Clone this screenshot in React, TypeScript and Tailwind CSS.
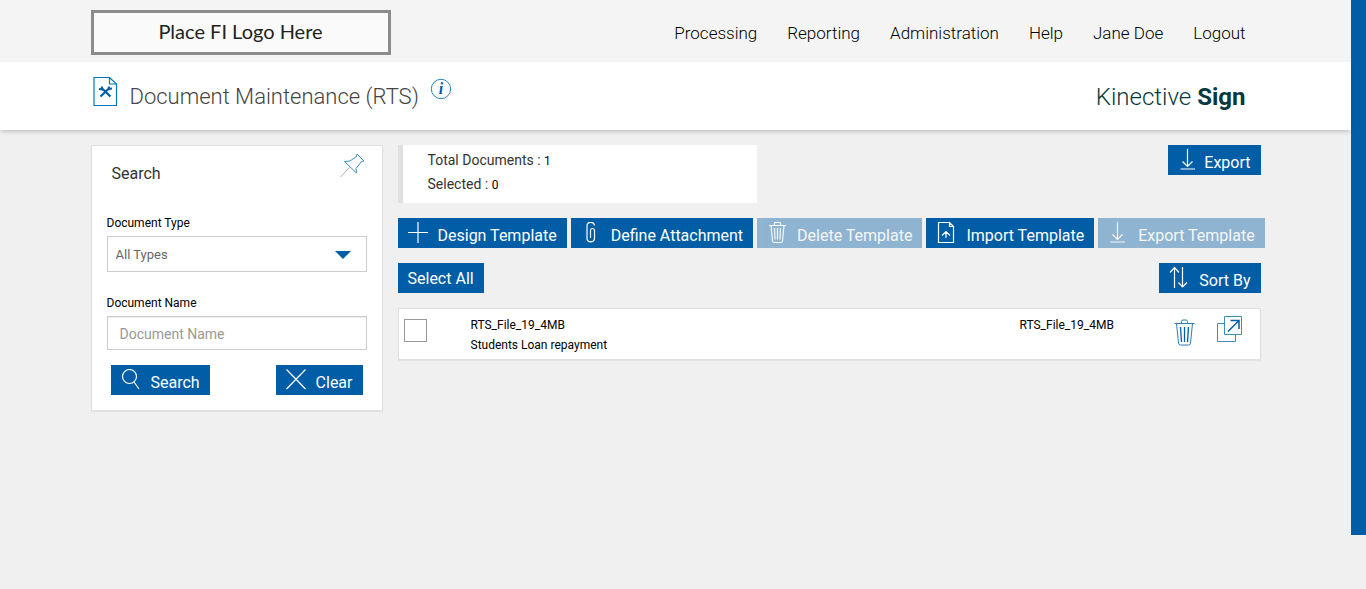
import type { ButtonHTMLAttributes, ReactNode } from "react";

const icons: Record<string, ReactNode> = {
  plus: <path d="M10 0v21M0 10.500h20" />,
  clip: <path d="M6 6.500V3.500a3.500 3 0 0 1 7.500 0M6 6.500v10.500a3.800 3.500 0 0 0 7.500 0V8.500a2 2 0 0 0-4 0V16" />,
  trash: (
    <path d="M2 3.500h17M7.500 3.500V1.500q0-1 1-1h4q1 0 1 1v2M4 3.500l1.500 15.500q.2 1.500 1.500 1.500h7q1.300 0 1.500-1.500L17 3.500M7.500 6l.5 11.500M10.500 6v11.500M13.500 6l-.5 11.500" />
  ),
  importFile: <path d="M2.500.5h11l4 4v16h-15zM13.500.5v4h4M10 16V9.500M6 13.500l4-4 4 4" />,
  download: <path d="M9.500 0v17M4.500 12.500l5 5 5-5M2.500 20h14.500" />,
  sort: <path d="M5.500 21V1M1 5.500l4.500-5 4.500 5M13.500 0v20M9.500 15.500l4 4.500 4.500-4.500" />,
  search: (
    <>
      <circle cx="8.500" cy="7.500" r="7" />
      <path d="M13 13l5 7" />
    </>
  ),
  close: <path d="M.5.5l19 19.500M19.500.5L.5 20" />,
};

function ActionButton({
  icon,
  tight = false,
  children,
  ...rest
}: { icon?: string; tight?: boolean; children: ReactNode } & ButtonHTMLAttributes<HTMLButtonElement>) {
  return (
    <button
      type="button"
      className={`flex h-[30px] shrink-0 items-start bg-[#005da6] px-2.5 text-base leading-8 whitespace-nowrap text-white hover:bg-[#004f8d] disabled:opacity-40 disabled:hover:bg-[#005da6] ${tight ? "gap-1.5" : "gap-2.5"}`}
      {...rest}
    >
      {icon && (
        <svg aria-hidden="true" viewBox="0 0 20 22" className="mt-1 h-[22px] w-5 shrink-0" fill="none" stroke="currentColor" strokeWidth="1.2">
          {icons[icon]}
        </svg>
      )}
      <span className={icon ? "pt-0.5" : ""}>{children}</span>
    </button>
  );
}

const navItems = ["Processing", "Reporting", "Administration", "Help", "Jane Doe", "Logout"];

function Header() {
  return (
    <header>
      <div className="bg-[#f4f4f4]">
        <div className="mx-auto flex h-[62px] max-w-[1170px] items-center justify-between pt-0.5 pr-[15px]">
          <div className="flex h-[45px] w-[300px] items-center justify-center border-3 border-[#8c8c8c] bg-[#fafafa] pb-0.5 font-['Lato',sans-serif] text-xl text-[#222]">
            Place FI Logo Here
          </div>
          <nav className="flex gap-[30px] pt-1 text-[17px] font-light text-black">
            {navItems.map((item) => (
              <a key={item} href="#">{item}</a>
            ))}
          </nav>
        </div>
      </div>
      <div className="relative bg-white shadow-[0_3px_4px_-1px_rgba(0,0,0,0.18)]">
        <div className="mx-auto flex h-[68px] max-w-[1170px] items-center justify-between pr-[15px]">
          <div className="flex items-start pb-0.5">
            <svg aria-hidden="true" viewBox="0 0 25 30" className="ml-0.5 h-[30px] w-[25px]" fill="none" stroke="#0079b8" strokeWidth="1.2">
              <path d="M1 .5h15.500l7 6.500v21.500H1zM16.500.5V7h7" />
              <path d="M8 10.500l9.500 9M17 10.500l-9.500 9" stroke="#005da6" strokeWidth="2.200" />
              <path d="M6 12l3 .5V9.500M19 11.500l-3 .5-.5-2.500" stroke="#005da6" strokeWidth="1.800" />
            </svg>
            <h1 className="ml-3 pt-1 text-[22px] leading-[32px] font-light text-[#444]">Document Maintenance (RTS)</h1>
            <button type="button" aria-label="Information" className="mt-px ml-[11px]">
              <svg viewBox="0 0 22 22" className="h-[22px] w-[22px]">
                <circle cx="11" cy="11" r="9.700" fill="none" stroke="#2c86bd" />
                <text x="11" y="16" textAnchor="middle" fill="#005da6" className="font-['Liberation_Serif',serif] text-[16px] font-bold italic">i</text>
              </svg>
            </button>
          </div>
          <div className="pt-0.5 text-[24px] leading-8 text-[#06383d]">
            <span className="font-light">Kinective</span> <span className="font-bold">Sign</span>
          </div>
        </div>
      </div>
    </header>
  );
}

function SearchPanel() {
  return (
    <aside className="w-[292px] shrink-0 self-start border border-[#dfdfdf] bg-white px-[15px] pb-[15px] text-black shadow-[0_1px_1px_rgba(0,0,0,0.05)]">
      <div className="flex items-start justify-between pr-0.5 pl-[5px]">
        <h2 className="pt-3.5 text-base leading-7 text-[#333]">Search</h2>
        <button type="button" aria-label="Pin panel" className="mt-[7px]">
          <svg viewBox="0 0 26 26" className="h-[26px] w-[26px]" fill="none" stroke="#3a8fc0">
            <path d="M18 1l7 7-2.500.5-5.500 7 .5 4.500-12-11.500 5.500-.5 6.500-4.500z" />
            <path d="M10.500 14.500L1.500 24" stroke="#a9b8b0" />
          </svg>
        </button>
      </div>
      <label htmlFor="document-type" className="mt-[25px] block text-xs leading-5">Document Type</label>
      <div className="relative mt-[3px]">
        <select id="document-type" className="block h-9 w-full appearance-none border border-[#ccc] bg-white px-2 pt-0.5 text-[13px] text-[#666]">
          <option>All Types</option>
        </select>
        <svg aria-hidden="true" viewBox="0 0 16 8" className="pointer-events-none absolute top-[15px] right-4 h-2 w-4" fill="#005da6">
          <path d="M0 0h16L8 8z" />
        </svg>
      </div>
      <label htmlFor="document-name" className="mt-[21px] block text-xs leading-5">Document Name</label>
      <input
        id="document-name"
        type="text"
        placeholder="Document Name"
        className="mt-[3px] block h-[34px] w-full border border-[#ccc] bg-white px-3 pt-0.5 text-sm shadow-[inset_0_1px_1px_rgba(0,0,0,0.075)] placeholder:text-[#999]"
      />
      <div className="mt-[15px] flex justify-between px-1">
        <ActionButton icon="search">Search</ActionButton>
        <ActionButton icon="close">Clear</ActionButton>
      </div>
    </aside>
  );
}

function DocumentRow() {
  return (
    <li className="flex h-[52px] items-start border border-[#dfdfdf] bg-white text-xs leading-5 text-black shadow-[0_1px_1px_rgba(0,0,0,0.05)]">
      <input
        type="checkbox"
        aria-label="Select RTS_File_19_4MB"
        className="mt-2.5 ml-[5px] size-[23px] shrink-0 appearance-none border border-[#999] bg-white checked:bg-[#005da6]"
      />
      <div className="ml-11 flex-1 pt-1.5">
        <p>RTS_File_19_4MB</p>
        <p>Students Loan repayment</p>
      </div>
      <p className="w-[154px] pt-1.5">RTS_File_19_4MB</p>
      <button type="button" aria-label="Delete document" className="mt-2.5">
        <svg viewBox="0 0 22 27" className="h-[27px] w-[22px]" fill="none" stroke="#2c7fb4">
          <path d="M.5 4.500h20M7.500 4.500V2.500q0-1.500 1.500-1.500h3q1.500 0 1.500 1.500v2M2.500 4.500l2 19.500q.2 2 2 2h8q1.800 0 2-2l2-19.500" />
          <path d="M6.500 8l1 15M10.500 8v15M14.500 8l-1 15" stroke="#005da6" strokeWidth="1.300" />
        </svg>
      </button>
      <button type="button" aria-label="Open document" className="mt-[7px] mr-4 ml-[21px]">
        <svg viewBox="0 0 27 27" className="size-[27px]" fill="none" stroke="#3a8fc0">
          <path d="M8 7.500H.5v18h18v-7" />
          <path d="M7.500.5h17v18h-17z" />
          <path d="M11 15.500L21.500 5M13.500 4.500H22V13" stroke="#005da6" strokeWidth="1.500" />
        </svg>
      </button>
    </li>
  );
}

function Documents() {
  return (
    <section className="min-w-0 flex-1">
      <div className="flex items-start justify-between">
        <div className="h-[58px] w-[359px] border-l-5 border-[#e0e0e0] bg-white pt-[3px] pl-[25px] text-sm leading-6 text-[#333]">
          <p>Total Documents : <span className="text-xs text-black">1</span></p>
          <p>Selected : <span className="text-xs text-black">0</span></p>
        </div>
        <ActionButton icon="download" tight>Export</ActionButton>
      </div>
      <div className="mt-[15px] flex gap-1">
        <ActionButton icon="plus">Design Template</ActionButton>
        <ActionButton icon="clip">Define Attachment</ActionButton>
        <ActionButton icon="trash" disabled>Delete Template</ActionButton>
        <ActionButton icon="importFile">Import Template</ActionButton>
        <ActionButton icon="download" disabled>Export Template</ActionButton>
      </div>
      <div className="mt-[15px] flex justify-between">
        <ActionButton>Select All</ActionButton>
        <ActionButton icon="sort">Sort By</ActionButton>
      </div>
      <ul className="mt-[15px]">
        <DocumentRow />
      </ul>
    </section>
  );
}

export default function App() {
  return (
    <div className="flex min-h-screen bg-[#f0f0f0] font-['Roboto',sans-serif]">
      <div className="min-w-0 flex-1">
        <Header />
        <main className="mx-auto flex max-w-[1170px] gap-[15px] pt-[15px]">
          <SearchPanel />
          <Documents />
        </main>
      </div>
      <div className="w-[15px] shrink-0">
        <div className="h-[535px] bg-[#005da6]" />
      </div>
    </div>
  );
}
